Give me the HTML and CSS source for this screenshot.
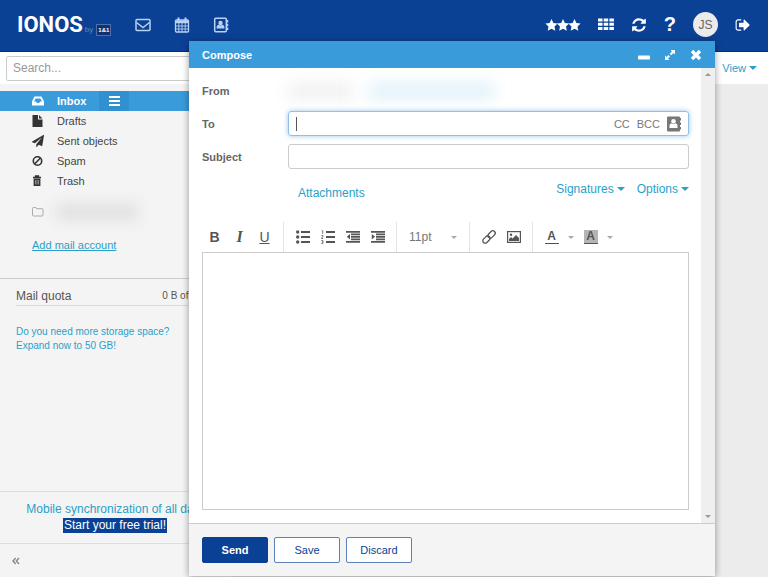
FILE: index.html
```html
<!DOCTYPE html>
<html lang="en">
<head>
    <meta charset="UTF-8">
    <meta name="viewport" content="width=device-width, initial-scale=1.0">
    <title>IONOS Webmail</title>
    <link rel="stylesheet" href="styles.css">
</head>
<body>
    <header class="topbar">
        <a class="logo" href="#">IONOS<small>by</small><span class="logo-badge">1&amp;1</span></a>
        <nav class="apps">
            <button aria-label="Mail">
                <svg width="16" height="14" viewBox="0 0 16 14" fill="none" stroke="currentColor" stroke-width="1.500"><rect x="1" y="1.500" width="14" height="11" rx="1"/><path d="M1.500 4.500L8 9.500l6.500-5"/></svg>
            </button>
            <button aria-label="Calendar">
                <svg width="16" height="16" viewBox="0 0 16 16" fill="none" stroke="currentColor"><rect x="1.500" y="3" width="13" height="12" rx="1" stroke-width="1.300"/><path d="M1 4.200h14M1 5.500h14" stroke-width="1.400"/><path d="M4.800 6v9M8 6v9M11.200 6v9M1 9h14M1 12h14" stroke-width=".9"/><path d="M4.500.5v4M11.500.5v4" stroke-width="2"/></svg>
            </button>
            <button aria-label="Address book">
                <svg width="16" height="16" viewBox="0 0 16 16"><rect x="1.700" y="1.200" width="11.600" height="13.600" rx="1" fill="none" stroke="currentColor" stroke-width="1.500"/><circle cx="7.500" cy="6" r="2.200" fill="currentColor"/><path d="M3.600 11.500V10q0-2 2-2.200 1.900 1.200 3.800 0 2 .2 2 2.200v1.500z" fill="currentColor"/><path d="M14.500 3v2.500M14.500 6.800v2.500M14.500 10.500V13" stroke="currentColor" stroke-width="1.500"/></svg>
            </button>
        </nav>
        <div class="tools">
            <button class="stars" aria-label="Favorites">
                <svg width="36" height="12" viewBox="0 0 36 12" fill="currentColor"><path id="star" d="M6.500 0l1.900 3.900 4.200.6-3.100 3 .8 4.300-3.800-2-3.800 2 .8-4.300-3.100-3 4.200-.6z"/><use href="#star" x="11.500"/><use href="#star" x="23"/></svg>
            </button>
            <button aria-label="Apps">
                <svg width="16" height="13" viewBox="0 0 16 13" fill="currentColor"><path d="M0 .5h4.500v3H0zM5.700.5h4.500v3H5.700zM11.400.5h4.500v3h-4.500zM0 4.800h4.500v3H0zM5.700 4.800h4.500v3H5.700zM11.400 4.800h4.500v3h-4.500zM0 9.100h4.500v3H0zM5.700 9.100h4.500v3H5.700zM11.400 9.100h4.500v3h-4.500z"/></svg>
            </button>
            <button aria-label="Refresh">
                <svg width="16" height="16" viewBox="0 0 1792 1792" fill="currentColor"><path d="M1639 1056q0 5-1 7-64 268-268 434.500t-478 166.500q-146 0-282.500-55t-243.500-157l-129 129q-19 19-45 19t-45-19-19-45v-448q0-26 19-45t45-19h448q26 0 45 19t19 45-19 45l-137 137q71 66 161 102t187 36q134 0 250-65t186-179q11-17 53-117 8-23 30-23h192q13 0 22.500 9.500t9.500 22.500zm25-800v448q0 26-19 45t-45 19h-448q-26 0-45-19t-19-45 19-45l138-138q-148-137-349-137-134 0-250 65t-186 179q-11 17-53 117-8 23-30 23h-199q-13 0-22.500-9.500t-9.500-22.500v-7q65-268 270-434.500t480-166.500q146 0 284 55.500t245 156.500l130-129q19-19 45-19t45 19 19 45z"/></svg>
            </button>
            <button class="help" aria-label="Help">?</button>
            <button class="avatar">JS</button>
            <button aria-label="Sign out">
                <svg width="16" height="16" viewBox="0 0 1792 1792" fill="currentColor"><path d="M704 1440q0 4 1 20t.5 26.500-3 23.500-10 19.500-20.500 6.500h-320q-119 0-203.500-84.500t-84.500-203.500v-704q0-119 84.500-203.500t203.500-84.500h320q13 0 22.500 9.500t9.500 22.500q0 4 1 20t.5 26.500-3 23.500-10 19.500-20.500 6.500h-320q-66 0-113 47t-47 113v704q0 66 47 113t113 47h312l11.500 1 11.500 3 8 5.500 7 9 2 13.500zm928-544q0 26-19 45l-544 544q-19 19-45 19t-45-19-19-45v-288h-448q-26 0-45-19t-19-45v-384q0-26 19-45t45-19h448v-288q0-26 19-45t45-19 45 19l544 544q19 19 19 45z"/></svg>
            </button>
        </div>
    </header>

    <div class="toolbar">
        <input class="search" type="search" placeholder="Search..." aria-label="Search">
        <button class="link">View <i class="caret"></i></button>
    </div>

    <div class="workspace">
        <aside class="sidebar">
            <ul class="folders">
                <li class="active">
                    <svg width="12" height="12" viewBox="0 0 12 12" fill="currentColor"><path fill-rule="evenodd" d="M2.500 1.500h7L12 6.500v4H0v-4zM3.600 3.400L2 6.500h2l.8 1.500h2.400L8 6.500h2L8.400 3.400z"/></svg>
                    <a href="#">Inbox</a>
                    <button class="folder-menu" aria-label="Folder actions">
                        <svg width="11" height="10" viewBox="0 0 11 10" fill="currentColor"><path d="M0 0h11v2H0zM0 4h11v2H0zM0 8h11v2H0z"/></svg>
                    </button>
                </li>
                <li>
                    <svg width="12" height="12" viewBox="0 0 12 12" fill="currentColor"><path d="M.5 0H6v4.500h4.500V12H.5zM7 0l3.500 3.500H7z"/></svg>
                    <a href="#">Drafts</a>
                </li>
                <li>
                    <svg width="12" height="12" viewBox="0 0 1792 1792" fill="currentColor"><path d="M1764 11q33 24 27 64l-256 1536q-5 29-32 45-14 8-31 8-11 0-24-5l-453-185-242 295q-18 23-49 23-13 0-22-4-19-7-30.500-23.500t-11.500-36.500v-349l864-1059-1069 925-395-162q-37-14-40-55-2-40 32-59l1664-960q15-9 32-9 20 0 36 11z"/></svg>
                    <a href="#">Sent objects</a>
                </li>
                <li>
                    <svg width="12" height="12" viewBox="0 0 12 12" fill="none" stroke="currentColor" stroke-width="1.600"><circle cx="5.500" cy="6" r="4.200"/><path d="M2.600 9l5.800-6"/></svg>
                    <a href="#">Spam</a>
                </li>
                <li>
                    <svg width="12" height="12" viewBox="0 0 12 12"><path d="M1 2.500h8M3.500 2V1h3v1" fill="none" stroke="currentColor" stroke-width="1.300"/><path d="M1.600 3.500h6.800V11H1.600z" fill="currentColor"/><path d="M3.500 5v4.500M5 5v4.500M6.500 5v4.500" stroke="#ccc" stroke-width=".6"/></svg>
                    <a href="#">Trash</a>
                </li>
            </ul>
            <div class="account">
                <svg width="12" height="10" viewBox="0 0 12 10" fill="none" stroke="currentColor"><path d="M.5 8V1.500q0-1 1-1h2q1 0 1 1.200h5.500q1 0 1 1V8q0 1-1 1H1.500q-1 0-1-1z"/></svg>
                <span class="masked"></span>
            </div>
            <a class="add-account" href="#">Add mail account</a>
            <section class="quota">
                <div class="quota-head"><span>Mail quota</span><small>0 B of 2 GB</small></div>
                <a href="#">Do you need more storage space?<br>Expand now to 50 GB!</a>
            </section>
            <section class="promo">
                <a href="#">Mobile synchronization of all data</a>
                <a class="trial" href="#">Start your free trial!</a>
            </section>
            <button class="collapse" aria-label="Collapse sidebar">
                <svg width="8" height="8" viewBox="0 0 8 8" fill="none" stroke="currentColor" stroke-width="1.400"><path d="M3.700 1L1 4l2.700 3M7 1L4.300 4 7 7"/></svg>
            </button>
        </aside>
        <main class="content"></main>
    </div>

    <form class="compose">
        <div class="compose-title">
            <h1>Compose</h1>
            <button type="button" aria-label="Minimize">
                <svg width="12" height="12" viewBox="0 0 12 12"><rect y="6.500" width="12" height="4" rx="1" fill="currentColor"/></svg>
            </button>
            <button type="button" aria-label="Maximize">
                <svg width="12" height="12" viewBox="0 0 12 12" fill="currentColor"><path d="M6.500 1H11v4.500L9.500 4 7.200 6.300 5.700 4.800 8 2.500zM1 11V6.500L2.500 8l2-2L6 7.500l-2 2L5.500 11z"/></svg>
            </button>
            <button type="button" aria-label="Close">
                <svg width="12" height="12" viewBox="0 0 12 12" stroke="currentColor" stroke-width="3.400"><path d="M2 2l8 8M10 2l-8 8"/></svg>
            </button>
        </div>
        <div class="compose-main">
            <div class="compose-body">
                <div class="row">
                    <span class="label">From</span>
                    <span class="sender"><i></i><i class="address"></i></span>
                </div>
                <div class="row">
                    <label class="label" for="to">To</label>
                    <div class="field focused">
                        <i class="cursor"></i>
                        <input id="to" type="text">
                        <button type="button">CC</button>
                        <button type="button">BCC</button>
                        <button type="button" aria-label="Choose contacts">
                            <svg width="14" height="16" viewBox="0 0 14 16"><rect width="13" height="15" y=".5" rx="1" fill="currentColor"/><path d="M13.400 2v2.500M13.400 6.500V9M13.400 11v2.500" stroke="currentColor" stroke-width="1.200"/><circle cx="6.500" cy="5.300" r="2.300" fill="#fff"/><path d="M2.500 12V9.500q0-2 2-2.200 2 1.400 4 0 2 .2 2 2.200V12z" fill="#fff"/></svg>
                        </button>
                    </div>
                </div>
                <div class="row">
                    <label class="label" for="subject">Subject</label>
                    <input class="field" id="subject" type="text">
                </div>
                <div class="extras">
                    <button class="link attach" type="button">Attachments</button>
                    <button class="link" type="button">Signatures <i class="caret"></i></button>
                    <button class="link" type="button">Options <i class="caret"></i></button>
                </div>
                <div class="format">
                    <div class="group">
                        <button type="button" aria-label="Bold"><b>B</b></button>
                        <button type="button" aria-label="Italic"><em>I</em></button>
                        <button type="button" aria-label="Underline"><u>U</u></button>
                    </div>
                    <div class="group">
                        <button type="button" aria-label="Bullet list">
                            <svg width="14" height="14" viewBox="0 0 14 14" fill="currentColor"><circle cx="1.700" cy="2" r="1.700"/><circle cx="1.700" cy="7" r="1.700"/><circle cx="1.700" cy="12" r="1.700"/><path d="M5 1h9v2H5zM5 6h9v2H5zM5 11h9v2H5z"/></svg>
                        </button>
                        <button type="button" aria-label="Numbered list">
                            <svg width="14" height="14" viewBox="0 0 14 14" fill="currentColor"><path d="M5 1h9v2H5zM5 6h9v2H5zM5 11h9v2H5z"/><path d="M.7.8h1v3M.4 5.500h1.500v1L.5 8.500H2M.4 10.500h1.500v3H.4M.8 12h1" fill="none" stroke="currentColor" stroke-width=".8"/></svg>
                        </button>
                        <button type="button" aria-label="Outdent">
                            <svg width="14" height="12" viewBox="0 0 14 12" fill="currentColor"><path d="M0 0h14v1.700H0zM5 2.500h9v1.700H5zM5 5h9v1.700H5zM5 7.500h9v1.700H5zM0 10h14v1.700H0zM4 3v5.600L.8 5.800z"/></svg>
                        </button>
                        <button type="button" aria-label="Indent">
                            <svg width="14" height="12" viewBox="0 0 14 12" fill="currentColor"><path d="M0 0h14v1.700H0zM5 2.500h9v1.700H5zM5 5h9v1.700H5zM5 7.500h9v1.700H5zM0 10h14v1.700H0zM.8 3v5.600L4 5.800z"/></svg>
                        </button>
                    </div>
                    <div class="group">
                        <button class="size" type="button">11pt <i class="caret"></i></button>
                    </div>
                    <div class="group">
                        <button type="button" aria-label="Insert link">
                            <svg width="14" height="14" viewBox="0 0 14 14" fill="none" stroke="currentColor" stroke-width="1.300"><g transform="rotate(-45 7 7)"><rect x="-.8" y="4.600" width="8.300" height="4.800" rx="2.400"/><rect x="6.500" y="4.600" width="8.300" height="4.800" rx="2.400"/></g></svg>
                        </button>
                        <button type="button" aria-label="Insert image">
                            <svg width="14" height="12" viewBox="0 0 14 12"><rect x=".6" y=".6" width="12.800" height="10.800" fill="none" stroke="currentColor" stroke-width="1.200"/><circle cx="4" cy="3.800" r="1.200" fill="currentColor"/><path d="M2 10V8l2-2 1.500 1.500L9 4l3 3v3z" fill="currentColor"/></svg>
                        </button>
                    </div>
                    <div class="group colors">
                        <button type="button" aria-label="Text color"><span class="swatch">A</span></button>
                        <button class="drop" type="button" aria-label="Text colors"><i class="caret"></i></button>
                        <button type="button" aria-label="Background color"><span class="swatch filled">A</span></button>
                        <button class="drop" type="button" aria-label="Background colors"><i class="caret"></i></button>
                    </div>
                </div>
                <textarea class="editor" aria-label="Message"></textarea>
            </div>
            <div class="scrollbar"><i class="caret up"></i><i class="caret"></i></div>
        </div>
        <div class="compose-footer">
            <button class="btn primary" type="submit">Send</button>
            <button class="btn" type="button">Save</button>
            <button class="btn" type="button">Discard</button>
        </div>
    </form>
</body>
</html>
```

FILE: styles.css
```css
* {
    box-sizing: border-box;
}
body {
    margin: 0;
    height: 100vh;
    display: flex;
    flex-direction: column;
    overflow: hidden;
    position: relative;
    font-family: "Liberation Sans", Arial, sans-serif;
    font-size: 12px;
    color: #555;
    background: #ececec;
}
button {
    display: flex;
    align-items: center;
    justify-content: center;
    padding: 0;
    border: none;
    background: none;
    font: inherit;
    color: inherit;
    cursor: pointer;
}
input, textarea {
    font: inherit;
    outline: none;
}
a, .link {
    color: #2a9fc9;
    text-decoration: none;
}
svg {
    display: block;
    flex: none;
    overflow: visible;
}
.caret {
    width: 0;
    height: 0;
    border: 4px solid transparent;
    border-top-color: currentColor;
    border-bottom: none;
}
.link {
    gap: 3px;
}

/* top bar */
.topbar {
    height: 52px;
    flex: none;
    display: flex;
    align-items: center;
    padding: 0 17px 2px;
    background: #0b4195;
    border-bottom: 1px solid #07306f;
    color: #fff;
}
.logo {
    display: flex;
    align-items: baseline;
    color: #fff;
    font-family: Roboto, sans-serif;
    font-size: 22px;
    font-weight: 700;
}
.logo small {
    margin: 0 3px 0 2px;
    font-family: "Liberation Sans", sans-serif;
    font-size: 8px;
    font-weight: 400;
    color: #5b86c6;
}
.logo-badge {
    padding: 0 1px;
    border: 1px solid #4a70b0;
    background: #12306e;
    font-family: "Liberation Sans", sans-serif;
    font-size: 6px;
    line-height: 10px;
}
.apps {
    display: flex;
    gap: 23px;
    margin-left: 24px;
    color: #b9d2f3;
}
.tools {
    display: flex;
    align-items: center;
    gap: 17px;
    margin-left: auto;
}
.help {
    font-size: 20px;
    font-weight: 700;
}
.avatar {
    width: 25px;
    height: 25px;
    border-radius: 50%;
    background: #ebebeb;
    color: #666;
}

/* search */
.toolbar {
    height: 32px;
    flex: none;
    display: flex;
    align-items: center;
    justify-content: space-between;
    padding: 0 11px 0 6px;
    background: #fff;
}
.search {
    width: 216px;
    height: 25px;
    padding: 0 6px;
    border: 1px solid #ccc;
    border-radius: 2px;
}
.search::placeholder {
    color: #999;
}
.toolbar .link {
    font-size: 11px;
}

/* sidebar */
.workspace {
    flex: 1;
    display: flex;
    min-height: 0;
}
.content {
    flex: 1;
}
.sidebar {
    width: 230px;
    display: flex;
    flex-direction: column;
    background: #f4f4f4;
}
.folders {
    margin: 0;
    padding: 7px 0 0;
    list-style: none;
    font-size: 11px;
}
.folders li {
    height: 20px;
    display: flex;
    align-items: center;
    gap: 13px;
    padding-left: 32px;
    color: #333;
}
.folders a {
    color: #444;
}
.folders .active, .folders .active a {
    background: #3a9bdb;
    color: #fff;
    font-weight: 700;
}
.folder-menu {
    width: 30px;
    height: 20px;
    background: #3190d0;
}
.account {
    display: flex;
    align-items: center;
    gap: 12px;
    margin: 12px 0 15px 32px;
    color: #aaa;
}
.masked {
    width: 82px;
    height: 18px;
    background: #e2e2e2;
    filter: blur(7px);
}
.add-account {
    margin-left: 32px;
    font-size: 11px;
    line-height: 18px;
    text-decoration: underline;
}
.quota {
    margin-top: 24px;
    padding: 7px 16px 0;
    border-top: 1px solid #ccc;
}
.quota-head {
    display: flex;
    align-items: center;
    justify-content: space-between;
    height: 20px;
    margin-bottom: 19px;
    border-bottom: 1px solid #ddd;
}
.quota-head small {
    font-size: 10px;
}
.quota a {
    display: block;
    font-size: 10px;
    line-height: 14px;
}
.promo {
    margin-top: auto;
    display: flex;
    flex-direction: column;
    align-items: center;
    gap: 1px;
    padding: 10px 0;
    border: 1px solid #ddd;
    border-width: 1px 0;
    line-height: 15px;
    white-space: nowrap;
}
.promo .trial {
    padding: 0 1px;
    background: #0b4195;
    color: #fff;
}
.collapse {
    height: 33px;
    justify-content: flex-start;
    padding-left: 12px;
    color: #888;
}

/* compose window */
.compose {
    position: absolute;
    top: 41px;
    right: 53px;
    bottom: 1px;
    left: 189px;
    display: flex;
    flex-direction: column;
    background: #fff;
    box-shadow: 0 1px 7px rgba(0, 0, 0, 0.4);
}
.compose-title {
    height: 27px;
    flex: none;
    display: flex;
    align-items: center;
    gap: 14px;
    padding: 0 13px;
    background: #3a9bdb;
    color: #fff;
}
.compose-title h1 {
    margin: 0 auto 0 0;
    font-size: 11px;
}
.compose-main {
    flex: 1;
    display: flex;
    min-height: 0;
}
.compose-body {
    flex: 1;
    display: flex;
    flex-direction: column;
    padding: 10px 12px 13px 13px;
}
.row {
    display: flex;
    align-items: center;
    height: 25px;
    margin-bottom: 8px;
}
.label {
    width: 86px;
    flex: none;
    font-size: 11px;
    font-weight: 700;
    color: #666;
}
.sender {
    display: flex;
    gap: 16px;
}
.sender i {
    width: 65px;
    height: 16px;
    background: #f0f0f0;
    filter: blur(8px);
}
.sender .address {
    width: 125px;
    background: #def1f9;
}
.field {
    flex: 1;
    height: 25px;
    padding: 0 8px;
    border: 1px solid #ccc;
    border-radius: 3px;
}
.field.focused {
    display: flex;
    align-items: center;
    gap: 7px;
    padding: 0 7px;
    border-color: #8fbfe8;
    box-shadow: 0 0 5px rgba(80, 160, 230, 0.6);
    color: #777;
    font-size: 11px;
}
.field input {
    flex: 1;
    min-width: 0;
    padding: 0;
    border: none;
    background: none;
}
.cursor {
    width: 1px;
    height: 14px;
    background: #555;
}
.extras {
    display: flex;
    gap: 12px;
    height: 45px;
    padding: 5px 0 0 96px;
    align-items: flex-start;
}
.extras .attach {
    margin: 4px auto 0 0;
}
.format {
    display: flex;
    height: 30px;
    color: #555;
}
.group {
    display: flex;
    align-items: center;
    padding: 0 6px;
    border-right: 1px solid #e4e4e4;
}
.group:first-child {
    padding-left: 0;
}
.group:last-child {
    border: none;
}
.group button {
    width: 25px;
    height: 28px;
    font-size: 14px;
}
.group em {
    font-family: "Liberation Serif", serif;
    font-size: 16px;
    font-weight: 700;
}
.group .size {
    width: 60px;
    justify-content: space-between;
    padding: 0 6px;
    font-size: 12px;
    color: #777;
}
.format .caret {
    border-width: 3px;
    border-bottom: none;
    border-top-color: #aaa;
}
.group .drop {
    width: 14px;
}
.swatch {
    width: 14px;
    font-size: 12px;
    font-weight: 700;
    line-height: 13px;
    border-bottom: 1px solid #555;
}
.swatch.filled {
    background: #b5b5b5;
}
.editor {
    flex: 1;
    width: 100%;
    padding: 8px;
    border: 1px solid #ccc;
    resize: none;
}
.scrollbar {
    width: 14px;
    display: flex;
    flex-direction: column;
    align-items: center;
    justify-content: space-between;
    padding: 5px 0;
    background: #efefef;
    color: #999;
}
.scrollbar .caret {
    border-width: 3px;
    border-bottom: none;
}
.scrollbar .up {
    transform: rotate(180deg);
}
.compose-footer {
    height: 53px;
    flex: none;
    display: flex;
    align-items: center;
    gap: 6px;
    padding: 0 13px;
    border-top: 1px solid #ccc;
    background: #f4f4f4;
}
.btn {
    width: 66px;
    height: 26px;
    border: 1px solid #5c82b8;
    border-radius: 2px;
    background: #fff;
    color: #0b4195;
    font-size: 11px;
}
.btn.primary {
    border-color: #0b4195;
    background: #0b4195;
    color: #fff;
    font-weight: 700;
}
```
